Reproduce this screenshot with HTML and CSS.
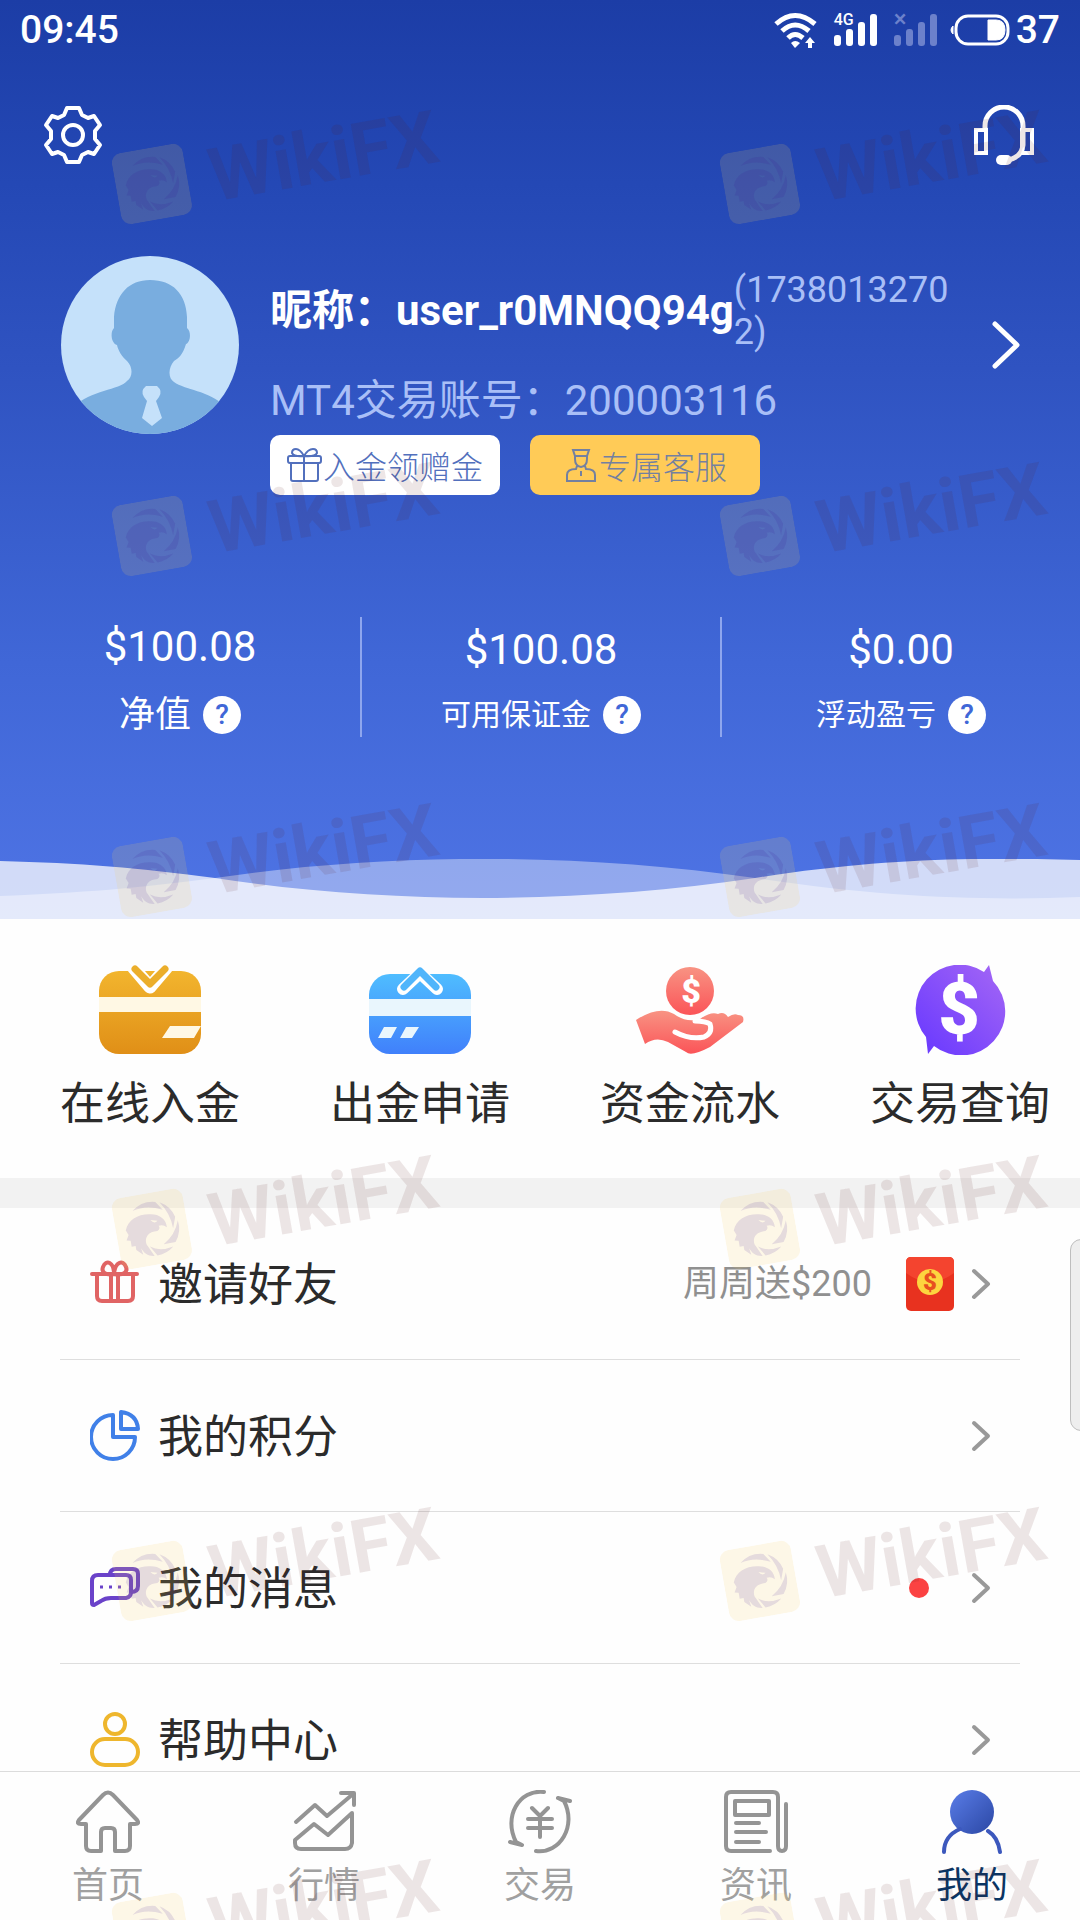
FILE: index.html
```html
<!DOCTYPE html>
<html lang="zh-CN">
<head>
<meta charset="utf-8">
<meta name="viewport" content="width=device-width, initial-scale=1">
<title>我的</title>
<link rel="stylesheet" href="styles.css">
</head>
<body>
<svg class="defs" aria-hidden="true">
  <defs>
    <linearGradient id="gold" x1="0" y1="0" x2="0" y2="1"><stop offset="0" stop-color="#f2b52e"/><stop offset="1" stop-color="#e08f17"/></linearGradient>
    <linearGradient id="sky" x1="0" y1="0" x2="0" y2="1"><stop offset="0" stop-color="#4fbdff"/><stop offset="1" stop-color="#4080fb"/></linearGradient>
    <linearGradient id="coral" x1="0" y1="0" x2="0" y2="1"><stop offset="0" stop-color="#f89383"/><stop offset="1" stop-color="#fb5458"/></linearGradient>
    <linearGradient id="violet" x1="1" y1="0" x2="0" y2="1"><stop offset="0" stop-color="#a567f5"/><stop offset="1" stop-color="#6637ff"/></linearGradient>
    <linearGradient id="royal" x1="0" y1="0" x2="1" y2="1"><stop offset="0" stop-color="#5a7de8"/><stop offset="1" stop-color="#2b47a4"/></linearGradient>
    <symbol id="chevron" viewBox="0 0 20 32"><path d="M3 3l14 13L3 29" fill="none" stroke="currentColor" stroke-width="4" stroke-linecap="round" stroke-linejoin="round"/></symbol>
    <symbol id="bars" viewBox="0 0 44 34"><g fill="currentColor"><rect x="0" y="22" width="7" height="11" rx="3"/><rect x="12" y="16" width="7" height="17" rx="3"/><rect x="24" y="9" width="7" height="24" rx="3"/><rect x="36" y="1" width="7" height="32" rx="3"/></g></symbol>
    <symbol id="badge" viewBox="0 0 72 72">
      <rect class="badge-plate" width="72" height="72" rx="10"/>
      <g class="badge-ink">
        <path d="M20 15A27 27 0 0 1 44 10L50 19Q34 11 20 15Z"/>
        <path d="M48 11A27 27 0 0 1 61 28L57 39Q57 24 48 11Z"/>
        <path d="M63 32A27 27 0 0 1 57 53L45 53Q58 46 63 32Z"/>
        <path d="M54 57A27 27 0 0 1 37 63L31 53Q40 60 54 57Z"/>
        <path fill-rule="evenodd" d="M10 33C14 23 24 19 36 21C45 22 52 28 51 37Q48 33 43 34Q45 37 41 39C32 38 27 43 28 50L34 63C27 62 24 58 22 53L23 60L17 54L17 50L13 50L13 44L9 43L12 38ZM36 27L43 29Q39 32 36 27Z"/>
      </g>
    </symbol>
  </defs>
</svg>

<div class="app">
  <main class="page">
    <section class="hero">
      <div class="status">
        <span class="status-time">09:45</span>
        <div class="status-icons">
          <svg class="wifi" viewBox="0 0 44 36" aria-label="Wi-Fi"><g fill="none" stroke="#fff" stroke-width="5"><path d="M2 12Q21-5 41 12"/><path d="M8 19Q21 7 35 19"/><path d="M14 26Q21 19 29 26"/></g><path d="M17 31Q21 27 26 31L21 36Z" fill="#fff"/><path d="M36 25l5 6h-3v5h-4v-5h-3z" fill="#fff"/></svg>
          <span class="signal"><svg aria-label="信号"><use href="#bars"/></svg><small>4G</small></span>
          <span class="signal signal-off"><svg aria-label="无信号"><use href="#bars"/></svg><small>×</small></span>
          <span class="battery"><svg viewBox="0 0 62 32" aria-hidden="true"><rect x="6" y="2" width="52" height="28" rx="12" fill="none" stroke="#fff" stroke-width="3"/><path d="M3 12v8Q-1 16 3 12ZM38 6h8q9 0 9 10t-9 10h-8z" fill="#fff" stroke="#fff" stroke-width="1"/></svg>37</span>
        </div>
      </div>

      <div class="toolbar">
        <button class="icon-button" aria-label="设置"><svg viewBox="0 0 60 60" fill="none" stroke="#fff" stroke-width="4" stroke-linejoin="round"><path d="M24 3H36L39 10L45 13L51 11L57 20L52 26V34L57 40L51 49L45 47L39 50L36 57H24L21 50L15 47L9 49L3 40L8 34V26L3 20L9 11L15 13L21 10Z"/><circle cx="30" cy="30" r="10"/></svg></button>
        <button class="icon-button" aria-label="客服"><svg viewBox="0 0 60 60" fill="none" stroke="#fff" stroke-width="4"><path d="M11 25V21A19 19 0 0 1 49 21V40Q48 52 34 55" stroke-width="5"/><path d="M2 25H12V48H2ZM48 25H58V48H48Z"/><rect x="22" y="50" width="16" height="10" rx="5" fill="#fff" stroke="none"/></svg></button>
      </div>

      <div class="profile">
        <svg class="avatar" viewBox="0 0 180 180" role="img" aria-label="头像"><defs><clipPath id="round"><circle cx="90" cy="90" r="89"/></clipPath></defs><g clip-path="url(#round)"><path fill="#c5e1fa" d="M0 0H180V180H0Z"/><path fill="#79addf" d="M90 25C113 25 126 39 127 62V73C132 77 130 88 126 89C123 99 119 103 114 106C108 113 108 123 114 127C125 135 148 135 166 152V180H14V152C30 135 60 135 67 126C73 122 73 112 67 106C62 102 58 95 57 90C51 88 50 77 54 73V62C56 39 69 25 90 25Z"/><path fill="#c5e1fa" d="M86 131H97Q103 136 99 142L96 146L102 163L92 171L82 163L87 146L84 142Q80 136 86 131Z"/></g></svg>
        <div class="profile-info">
          <div class="nick-row">
            <strong class="nick">昵称：user_r0MNQQ94g</strong>
            <span class="phone">(17380132702)</span>
          </div>
          <p class="account">MT4交易账号：200003116</p>
          <div class="pills">
            <button class="pill pill-white"><svg viewBox="0 0 36 36" fill="none" stroke="currentColor" stroke-width="2"><rect x="1" y="9" width="33" height="7" rx="2"/><path d="M4 16V32Q4 34 6 34H29Q31 34 31 32V16M17 9V34M17 9Q7 10 5 6Q5 2 9 2Q13 2 17 9Q21 2 26 2Q30 2 30 6Q28 10 17 9"/></svg>入金领赠金</button>
            <button class="pill pill-gold"><svg viewBox="0 0 32 36" fill="none" stroke="currentColor" stroke-width="2"><path d="M8 3H24L22 9H10ZM10 9V12Q10 19 16 20Q22 19 22 12V9M12 19L11 22Q2 22 2 28V34H30V28Q30 22 21 22L20 19M16 24V29"/></svg>专属客服</button>
          </div>
        </div>
        <a class="profile-more" href="#profile" aria-label="个人资料"><svg viewBox="0 0 30 48" fill="none" stroke="#fff" stroke-width="5" stroke-linecap="round" stroke-linejoin="round"><path d="M3 3L25 24L3 45"/></svg></a>
      </div>

      <div class="stats">
        <div class="stat stat-lead"><span class="stat-value">$100.08</span><div class="stat-label">净值<button class="help" aria-label="净值说明">?</button></div></div>
        <div class="stat"><span class="stat-value">$100.08</span><div class="stat-label">可用保证金<button class="help" aria-label="可用保证金说明">?</button></div></div>
        <div class="stat"><span class="stat-value">$0.00</span><div class="stat-label">浮动盈亏<button class="help" aria-label="浮动盈亏说明">?</button></div></div>
      </div>

      <svg class="waves" viewBox="0 0 1080 60" preserveAspectRatio="none" aria-hidden="true"><path fill="#fff" fill-opacity=".39" d="M0 37C80 34 140 29 215 19C390-7 580-6 755 19C880 38 980 42 1080 38V60H0Z"/><path fill="#fff" fill-opacity=".75" d="M0 2C80 4 140 9 215 19C390 46 580 45 755 19C880-1 980-2 1080 1V60H0Z"/></svg>
    </section>

    <nav class="actions" aria-label="资金">
      <a href="#deposit"><svg viewBox="0 0 110 90"><rect x="4" y="6" width="102" height="83" rx="20" fill="url(#gold)"/><path fill="#fff8e4" d="M4 32H106V47H4ZM75 61H106L99 73H67Z"/><path d="M38 2L55 22L72 2" fill="none" stroke="#fff" stroke-width="13" stroke-linejoin="round"/><path d="M40 4L55 19L70 4" fill="none" stroke="#ebae2b" stroke-width="7" stroke-linecap="round" stroke-linejoin="round"/></svg>在线入金</a>
      <a href="#withdraw"><svg viewBox="0 0 110 90"><rect x="4" y="9" width="102" height="80" rx="21" fill="url(#sky)"/><path fill="#e9f6fd" d="M4 34H106V51H4ZM19 62H32L26 73H13ZM41 62H54L47 73H35Z"/><path d="M38 24L55 8L72 24" fill="none" stroke="#fff" stroke-width="12" stroke-linecap="round" stroke-linejoin="round"/><path d="M39 22L55 6L71 22" fill="none" stroke="#50b5fb" stroke-width="7" stroke-linecap="round" stroke-linejoin="round"/></svg>出金申请</a>
      <a href="#records"><svg viewBox="0 0 110 90"><circle cx="55" cy="26" r="24" fill="url(#coral)"/><text class="coin" x="56" y="38">$</text><path fill="url(#coral)" d="M1 55Q24 40 39 49Q51 58 65 54Q76 46 83 49Q89 46 93 52Q99 48 103 50Q110 50 108 57L75 82Q56 92 51 87Q42 82 33 77Q21 71 10 79Z"/><path d="M40 67Q55 75 69 72Q78 68 75 59Q71 56 60 56" fill="none" stroke="#fff" stroke-width="5" stroke-linecap="round"/></svg>资金流水</a>
      <a href="#trades"><svg viewBox="2 1 110 90"><path fill="url(#violet)" d="M81 8L86 1L90 17A44 44 0 0 1 31 82L25 90L23 73A44 44 0 0 1 81 8Z"/><text class="coin coin-large" x="56" y="70">$</text></svg>交易查询</a>
    </nav>

    <div class="menu">
      <a class="row" href="#invite">
        <svg class="row-icon" viewBox="0 0 50 56" fill="none" stroke="#e06464" stroke-width="4" stroke-linecap="round"><path d="M2 18H47M7 19V40Q7 45 12 45H38Q43 45 43 40V19M21 19V45M28 19V45"/><path d="M24 18C16 20 11 16 13 11C16 3 24 6 24 18C25 6 33 3 36 11C38 16 33 20 24 18"/></svg>
        <span class="row-title">邀请好友</span>
        <span class="row-note">周周送$200</span>
        <svg class="envelope" viewBox="0 0 48 54" aria-hidden="true"><rect width="48" height="54" rx="5" fill="#e8321f"/><path d="M0 5Q0 0 5 0H43Q48 0 48 5V16Q24 34 0 16Z" fill="#f4442f"/><circle cx="24" cy="25" r="13" fill="#fdd53f"/><text x="24" y="33">$</text></svg>
        <svg class="row-arrow"><use href="#chevron"/></svg>
      </a>
      <a class="row" href="#points">
        <svg class="row-icon" viewBox="0 0 50 56" fill="none" stroke="#4080e8" stroke-width="4" stroke-linejoin="round"><path d="M23 7V29H45A22 22 0 1 1 23 7Z"/><path d="M31 4V21H48Q47 6 31 4Z"/></svg>
        <span class="row-title">我的积分</span>
        <svg class="row-arrow"><use href="#chevron"/></svg>
      </a>
      <a class="row" href="#messages">
        <svg class="row-icon" viewBox="0 0 50 56" fill="none" stroke="#6a42c9" stroke-width="4" stroke-linejoin="round"><path d="M8 15H36Q41 15 41 20V32Q41 37 36 38H21Q15 38 11 41L4 45Q2 45 2 43V21Q2 15 8 15Z"/><path d="M20 15Q20 9 26 9H43Q48 9 48 14V26Q48 32 41 32"/><path d="M10 27H13M19 27H22M28 27H31" stroke-width="3"/></svg>
        <span class="row-title">我的消息</span>
        <span class="dot" role="img" aria-label="未读"></span>
        <svg class="row-arrow"><use href="#chevron"/></svg>
      </a>
      <a class="row" href="#help">
        <svg class="row-icon" viewBox="0 0 50 56" fill="none" stroke="#eeb62d" stroke-width="4"><circle cx="25" cy="12" r="10"/><rect x="2" y="27" width="46" height="26" rx="13"/></svg>
        <span class="row-title">帮助中心</span>
        <svg class="row-arrow"><use href="#chevron"/></svg>
      </a>
    </div>
  </main>

  <nav class="tabs" aria-label="主导航">
    <a href="#home"><svg viewBox="0 0 64 64"><path d="M27 5Q32 0 37 5L61 30Q64 34 59 34H54V56Q54 61 49 61H39V42Q39 38 35 38H29Q25 38 25 42V61H15Q10 61 10 56V34H5Q0 34 3 30Z"/></svg>首页</a>
    <a href="#market"><svg viewBox="0 0 64 64"><path d="M4 32L23 15L35 26L61 4M49 3H62V15M60 23L36 45L22 34L3 50V53Q3 59 9 59H53Q59 59 60 53Z"/></svg>行情</a>
    <a href="#trade"><svg viewBox="0 0 64 64"><path d="M36 2C11-1-5 27 8 52L14 55L2 52M28 61C52 64 69 36 56 11L50 8L62 11M24 18L32 26L40 18M20 29H44M20 38H44M32 26V47"/></svg>交易</a>
    <a href="#news"><svg viewBox="0 0 64 64"><path d="M46 61H7Q2 61 2 56V7Q2 2 7 2H49Q54 2 54 7V56Q54 61 58 61T62 56V14M11 11H45V25H11ZM12 33H35M12 42H42M12 52H35"/></svg>资讯</a>
    <a class="current" href="#me" aria-current="page"><svg viewBox="0 0 64 64"><circle cx="32" cy="22" r="22" fill="url(#royal)"/><path d="M4 62Q4 46 20 39M48 41Q58 47 60 62" stroke="#3c58bd"/></svg>我的</a>
  </nav>

  <div class="side-handle"></div>

  <div class="watermarks" aria-hidden="true">
    <div class="sheet">
      <div class="mark"><svg><use href="#badge"/></svg>WikiFX</div><div class="mark"><svg><use href="#badge"/></svg>WikiFX</div>
      <div class="mark"><svg><use href="#badge"/></svg>WikiFX</div><div class="mark"><svg><use href="#badge"/></svg>WikiFX</div>
    </div>
    <div class="sheet">
      <div class="mark"><svg><use href="#badge"/></svg>WikiFX</div><div class="mark"><svg><use href="#badge"/></svg>WikiFX</div>
      <div class="mark"><svg><use href="#badge"/></svg>WikiFX</div><div class="mark"><svg><use href="#badge"/></svg>WikiFX</div>
      <div class="mark"><svg><use href="#badge"/></svg>WikiFX</div><div class="mark"><svg><use href="#badge"/></svg>WikiFX</div>
      <div class="mark"><svg><use href="#badge"/></svg>WikiFX</div><div class="mark"><svg><use href="#badge"/></svg>WikiFX</div>
    </div>
  </div>
</div>
</body>
</html>
```
FILE: styles.css
```css
* { box-sizing: border-box; }

body {
  margin: 0;
  background: #fefefe;
  color: #2b2b2b;
  font-family: Roboto, "Noto Sans CJK SC", sans-serif;
}

a { color: inherit; text-decoration: none; }

button {
  margin: 0;
  padding: 0;
  border: 0;
  background: none;
  color: inherit;
  font: inherit;
}

svg { display: block; flex: none; }

.defs { position: absolute; width: 0; height: 0; }

.app {
  position: relative;
  display: flex;
  flex-direction: column;
  height: 100vh;
  overflow: hidden;
}

.page {
  flex: 1;
  min-height: 0;
  overflow-y: auto;
  scrollbar-width: none;
}

/* Header */
.hero {
  background: linear-gradient(#1c3da6, #2448b5 20%, #2f53c1 40%, #4067d7 72%, #4f74e5);
  color: #fff;
}

.status {
  display: flex;
  align-items: center;
  justify-content: space-between;
  height: 60px;
  padding: 0 20px;
  font-size: 39px;
  font-weight: 500;
  line-height: 60px;
}

.status-icons { display: flex; align-items: center; gap: 16px; }

.wifi { width: 44px; height: 36px; }

.signal { position: relative; }
.signal svg { width: 44px; height: 34px; }
.signal small {
  position: absolute;
  top: 0;
  left: 0;
  font-size: 16px;
  line-height: 14px;
}
.signal-off { color: #6c81cb; }
.signal-off small { font-size: 24px; line-height: 12px; }

.battery { display: flex; align-items: center; gap: 4px; margin-left: -4px; }
.battery svg { width: 62px; height: 32px; }

.toolbar {
  display: flex;
  justify-content: space-between;
  padding: 45px 46px 0 43px;
}
.icon-button svg { width: 60px; height: 60px; }

.profile {
  display: flex;
  align-items: flex-start;
  gap: 30px;
  padding: 90px 58px 0 60px;
}
.avatar { width: 180px; height: 180px; }
.profile-info { flex: 1; min-width: 0; padding-top: 14px; }
.nick-row { display: flex; align-items: center; min-height: 84px; }
.nick { flex: none; font-size: 42px; line-height: 60px; }
.phone {
  color: #a9bff7;
  font-size: 36px;
  line-height: 42px;
  word-break: break-all;
}
.account {
  margin: 18px 0 4px;
  color: #a9bff7;
  font-size: 42px;
  line-height: 60px;
}
.pills { display: flex; gap: 30px; }
.pill {
  display: flex;
  align-items: center;
  justify-content: center;
  width: 230px;
  height: 60px;
  border-radius: 10px;
  color: #5270bd;
  font-size: 32px;
  font-weight: 300;
}
.pill svg { width: 36px; height: 36px; }
.pill-white { background: #fff; }
.pill-gold { background: #ffcb57; color: #7380a0; }
.profile-more { padding-top: 66px; }
.profile-more svg { width: 30px; height: 48px; }

.stats {
  display: grid;
  grid-template-columns: repeat(3, 1fr);
  margin: 122px 0;
}
.stat {
  display: flex;
  flex-direction: column;
  align-items: center;
  justify-content: center;
  gap: 18px;
  height: 120px;
  padding-top: 2px;
}
.stat + .stat { border-left: 2px solid #8ea6ee; }
.stat-value { font-size: 42px; line-height: 56px; }
.stat-label {
  display: flex;
  align-items: center;
  gap: 12px;
  font-size: 30px;
  line-height: 38px;
}
.stat-lead .stat-label { font-size: 36px; line-height: 44px; }
.help {
  width: 38px;
  height: 38px;
  border-radius: 50%;
  background: #fff;
  color: #4067d7;
  font-size: 28px;
  font-weight: 500;
  line-height: 38px;
}

.waves { width: 100%; height: 60px; }

/* Shortcuts */
.actions {
  display: flex;
  justify-content: space-between;
  padding: 46px 30px 46px 60px;
  border-bottom: 30px solid #f2f2f2;
}
.actions a {
  display: flex;
  flex-direction: column;
  align-items: center;
  gap: 23px;
  font-size: 45px;
  line-height: 54px;
}
.actions svg { width: 110px; height: 90px; }
.coin { fill: #fff; font-size: 34px; font-weight: 900; text-anchor: middle; }
.coin-large { font-size: 72px; }

/* Menu */
.menu { padding: 0 60px; }
.row {
  display: flex;
  align-items: center;
  height: 152px;
  padding: 0 29px 0 30px;
  border-bottom: 1px solid #dedede;
}
.row-icon { width: 50px; height: 56px; }
.row-title {
  flex: 1;
  padding: 4px 0 0 18px;
  font-size: 45px;
  line-height: 60px;
}
.row-note { color: #909090; font-size: 36px; line-height: 48px; }
.row-arrow { width: 20px; height: 32px; color: #999; }
.envelope { width: 48px; height: 54px; margin: 0 17px 0 34px; }
.envelope text { fill: #e8501f; font-size: 24px; font-weight: 900; text-anchor: middle; }
.dot {
  width: 20px;
  height: 20px;
  margin-right: 42px;
  border-radius: 50%;
  background: #fb4242;
}

/* Bottom tabs */
.tabs {
  display: grid;
  grid-template-columns: repeat(5, 1fr);
  height: 149px;
  padding-top: 18px;
  border-top: 1px solid #dcdcdc;
  background: #fefefe;
}
.tabs a {
  display: flex;
  flex-direction: column;
  align-items: center;
  gap: 8px;
  color: #a0a0a0;
  font-size: 36px;
  line-height: 48px;
}
.tabs svg {
  width: 64px;
  height: 64px;
  fill: none;
  stroke: #949494;
  stroke-width: 4;
  stroke-linecap: round;
  stroke-linejoin: round;
}
.tabs .current { color: #0b3563; }
.tabs circle { stroke: none; }

.side-handle {
  position: absolute;
  top: 1239px;
  right: -12px;
  width: 22px;
  height: 192px;
  border: 1px solid #bebebe;
  border-radius: 12px;
  background: #eee;
}

/* Repeating watermark laid over the whole screen */
.watermarks {
  position: absolute;
  inset: 0;
  padding: 126px 0 0 114px;
  overflow: hidden;
  pointer-events: none;
}
.sheet {
  display: grid;
  grid-template-columns: 608px 608px;
  grid-auto-rows: 352px;
  align-items: start;
  justify-items: start;
}
.sheet + .sheet { margin-top: -11px; }
.mark {
  display: flex;
  gap: 22px;
  height: 72px;
  color: rgba(90, 30, 30, 0.11);
  font-size: 74px;
  font-weight: 700;
  line-height: 78px;
  transform: rotate(-10deg);
}
.mark svg { width: 72px; height: 72px; }
.badge-plate { fill: rgba(245, 205, 100, 0.15); }
.badge-ink { fill: rgba(60, 20, 150, 0.12); }
```
